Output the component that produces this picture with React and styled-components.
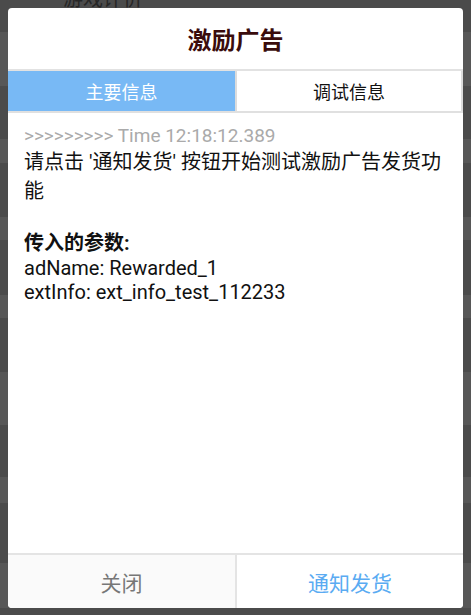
import React, { useState } from 'react'
import styled, { createGlobalStyle } from 'styled-components'

const GlobalStyle = createGlobalStyle`
  html, body {
    margin: 0;
    padding: 0;
    background: #4b4b4b;
    font-family: Roboto, "Noto Sans CJK SC", sans-serif;
  }
`

const Screen = styled.div`
  position: relative;
  width: 471px;
  height: 615px;
  overflow: hidden;
`

const Backdrop = styled.div`
  display: flex;
  flex-direction: column;
`

const BackRow = styled.div`
  height: ${p => p.h}px;
  background: ${p => (p.light ? '#575757' : '#4b4b4b')};
  flex-shrink: 0;
`

// list item title behind the overlay, only its lower edge peeks out
const BackTitle = styled.div`
  padding-left: 63px;
  margin-top: -11px;
  font-size: 20px;
  line-height: 20px;
  color: #262626;
`

const Dialog = styled.div`
  position: absolute;
  top: 8px;
  left: 8px;
  width: 455px;
  height: 600px;
  background: #fff;
  border-radius: 4px;
  overflow: hidden;
  display: flex;
  flex-direction: column;
`

const Header = styled.div`
  height: 61px;
  flex-shrink: 0;
  display: flex;
  align-items: center;
  justify-content: center;
  border-bottom: 2px solid #e2e2e2;
`

const Title = styled.h1`
  margin: 0;
  font-size: 24px;
  font-weight: bold;
  color: #3a0c0c;
`

const Tabs = styled.div`
  display: grid;
  grid-template-columns: 227px 1fr;
  height: 40px;
  flex-shrink: 0;
  border-bottom: 2px solid #e0e0e0;
`

const Tab = styled.button`
  margin: 0;
  padding: 0;
  border: none;
  border-left: ${p => (p.active ? 'none' : '2px solid #dcdcdc')};
  border-right: ${p => (p.active ? 'none' : '2px solid #dcdcdc')};
  background: ${p => (p.active ? '#78b9f5' : '#fff')};
  color: ${p => (p.active ? '#fff' : '#111')};
  font-family: inherit;
  font-size: 18px;
  cursor: pointer;
`

const Content = styled.div`
  flex: 1;
  padding: 11px 16px 0;
  color: #111;
`

const TimeLine = styled.div`
  font-size: 19px;
  line-height: 24px;
  color: #aaaaaa;
`

const Message = styled.p`
  margin: 0;
  font-size: 20px;
  line-height: 29px;
`

const Params = styled.div`
  margin-top: 24px;
  font-size: 20px;
  line-height: 24px;
`

const ParamsTitle = styled.div`
  font-weight: bold;
  line-height: 26px;
`

const Footer = styled.div`
  display: grid;
  grid-template-columns: 227px 1fr;
  height: 53px;
  flex-shrink: 0;
  border-top: 2px solid #e4e4e4;
`

const FooterButton = styled.button`
  margin: 0;
  padding: 0;
  border: none;
  border-left: ${p => (p.primary ? '2px solid #e4e4e4' : 'none')};
  background: ${p => (p.primary ? '#fff' : '#fafafa')};
  color: ${p => (p.primary ? '#5aabf2' : '#777')};
  font-family: inherit;
  font-size: 21px;
  cursor: pointer;
`

const rows = [
  [32, false], [54, true], [53, false], [24, true], [54, false], [23, true],
  [55, false], [23, true], [54, false], [53, true], [52, false], [26, true],
  [60, false], [45, true], [7, false],
]

export default function App() {
  const [tab, setTab] = useState(0)

  return (
    <Screen>
      <GlobalStyle />
      <Backdrop>
        {rows.map(([h, light], i) => (
          <BackRow key={i} h={h} light={light}>
            {i === 0 && <BackTitle>游戏评价</BackTitle>}
          </BackRow>
        ))}
      </Backdrop>
      <Dialog>
        <Header>
          <Title>激励广告</Title>
        </Header>
        <Tabs>
          <Tab active={tab === 0} onClick={() => setTab(0)}>主要信息</Tab>
          <Tab active={tab === 1} onClick={() => setTab(1)}>调试信息</Tab>
        </Tabs>
        <Content>
          <TimeLine>&gt;&gt;&gt;&gt;&gt;&gt;&gt;&gt;&gt; Time 12:18:12.389</TimeLine>
          <Message>请点击 '通知发货' 按钮开始测试激励广告发货功能</Message>
          <Params>
            <ParamsTitle>传入的参数:</ParamsTitle>
            <div>adName: Rewarded_1</div>
            <div>extInfo: ext_info_test_112233</div>
          </Params>
        </Content>
        <Footer>
          <FooterButton>关闭</FooterButton>
          <FooterButton primary>通知发货</FooterButton>
        </Footer>
      </Dialog>
    </Screen>
  )
}
